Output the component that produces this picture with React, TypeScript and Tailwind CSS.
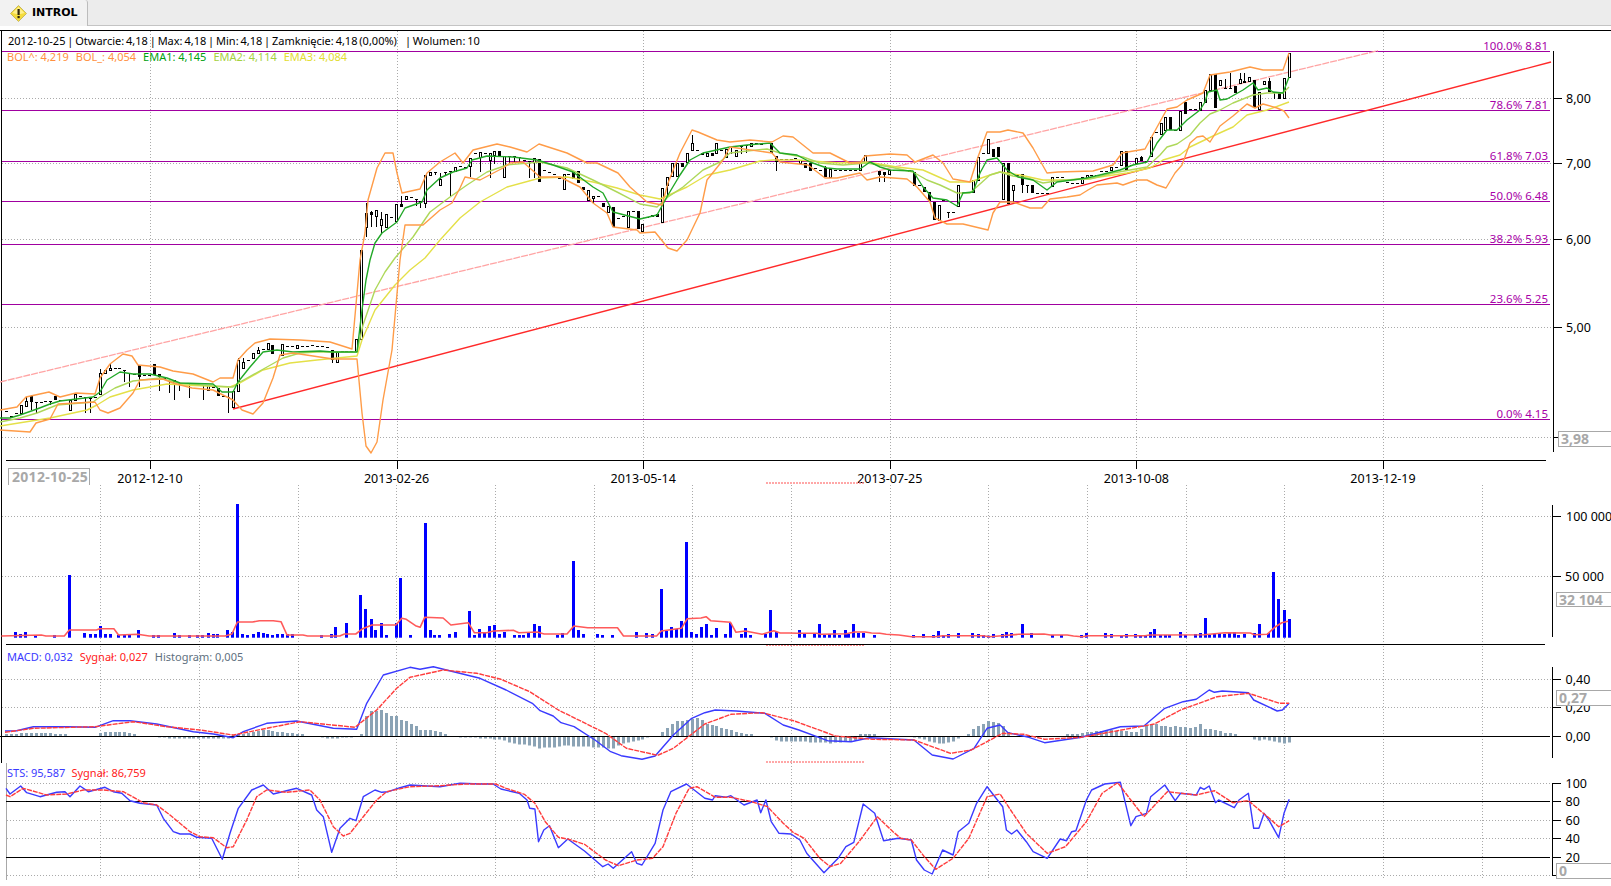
import type { ReactNode } from "react";

type Pt = [number, number];

const W = 1611;
const step = 4.934;
const cx = (i: number) => 6 + step * i;

// crop coordinates -> page coordinates
const conv = (flat: number[], ox: number, oy: number, sx: number, sy = 3): Pt[] => {
  const out: Pt[] = [];
  for (let i = 0; i < flat.length; i += 2) out.push([ox + flat[i] / sx, oy + flat[i + 1] / sy]);
  return out;
};
const pair = (flat: number[]) => conv(flat, 0, 0, 1, 1);
const toPoints = (p: Pt[]) =>
  [...p]
    .sort((a, b) => a[0] - b[0])
    .map(([x, y]) => `${x.toFixed(1)},${y.toFixed(1)}`)
    .join(" ");

const bolUp = pair([
  0,410,17,407,26,397,49,392,60,397,76,393,95,394,100,378,110,364,123,354,132,356,138,365,160,367,173,371,193,374,213,382,220,378,233,378,238,360,247,350,255,343,270,339,300,340,330,342,352,349,
  360,260,365,233,368,200,377,168,385,153,393,153,397,173,402,193,420,189,427,173,440,162,455,153,463,163,473,150,497,144,510,147,527,152,539,144,567,153,587,163,597,163,618,173,630,187,647,202,662,205,668,183,680,153,692,130,698,132,717,140,
  730,142,750,140,772,142,783,136,793,137,813,153,830,153,850,163,860,163,865,156,890,154,907,155,915,162,933,155,943,163,953,179,970,182,978,157,987,132,
  1000,132,1008,130,1023,133,1033,148,1047,173,1058,172,1093,171,1113,165,1122,153,1145,149,1167,109,1177,107,1187,100,1203,93,1210,75,1230,72,1250,67,1263,70,1283,70,1289,53,
]);
const bolLow = pair([
  0,430,30,432,36,423,50,419,58,404,95,402,100,410,108,413,120,408,133,393,140,380,163,379,173,383,192,388,213,390,233,400,242,410,253,414,263,403,273,378,277,365,280,355,293,353,333,359,357,359,362,413,366,446,371,453,377,442,383,400,392,350,
  400,260,405,225,423,225,440,210,452,203,460,188,465,177,480,180,503,168,510,163,523,162,540,177,560,177,580,187,593,203,607,213,613,227,637,230,640,233,655,232,668,248,677,251,687,240,700,213,707,180,723,160,
  730,147,772,153,780,162,808,165,825,178,837,178,860,173,867,180,880,177,907,179,917,187,930,202,935,218,947,224,963,224,988,230,993,213,
  1000,202,1013,202,1030,208,1042,208,1050,199,1067,197,1080,195,1088,190,1097,185,1117,183,1123,185,1137,180,1147,180,1157,185,1166,188,1175,173,1182,165,1190,143,1197,137,1203,136,1210,142,1220,126,1233,116,1247,104,1255,108,1263,104,1277,108,1284,111,1289,118,
]);
const ema1 = pair([
  0,418,10,418,20,415,37,409,50,404,60,401,93,397,100,392,107,380,120,372,133,374,150,374,167,378,180,383,213,384,222,392,233,392,238,382,250,367,263,352,277,350,293,352,320,351,333,352,357,352,362,310,366,280,
  370,260,375,243,382,233,397,222,405,208,422,202,427,190,440,178,453,172,467,168,472,160,487,156,513,157,537,160,553,165,573,172,593,187,603,193,613,212,640,219,657,215,668,195,680,175,690,160,703,153,
  730,147,747,145,770,143,780,153,797,155,810,162,827,168,837,169,860,169,870,162,880,167,890,170,913,171,923,187,933,198,947,200,957,206,963,193,973,192,980,173,987,160,997,158,
  1007,170,1018,177,1033,180,1047,190,1057,182,1087,178,1100,175,1120,170,1133,165,1147,162,1157,143,1167,130,1177,130,1187,120,1200,110,1205,102,1208,92,1217,90,1220,100,1227,99,1243,90,1253,83,1258,90,1267,88,1273,92,1283,93,1289,77,
]);
const ema2 = pair([
  0,422,20,418,37,413,57,405,93,402,100,397,115,388,133,381,160,378,177,383,213,386,233,387,240,382,267,367,283,358,300,353,317,352,357,352,363,325,375,290,385,272,
  395,258,413,237,430,212,450,197,467,185,487,172,507,165,540,162,567,168,593,180,617,192,640,204,657,207,668,197,683,187,703,170,720,162,
  730,153,747,151,767,149,780,153,803,157,820,163,843,165,867,163,890,167,913,172,927,180,940,185,957,193,970,193,990,175,
  1000,172,1013,176,1027,178,1043,183,1063,180,1090,179,1113,173,1147,167,1160,155,1167,147,1177,144,1190,135,1200,123,1210,114,1220,110,1233,103,1253,95,1267,93,1283,93,1289,87,
]);
const ema3 = pair([
  0,426,50,418,87,410,97,405,110,397,133,390,167,384,183,385,230,387,240,383,263,370,290,363,317,360,357,356,362,340,375,310,395,285,410,270,
  425,258,440,240,460,218,480,202,507,187,540,178,567,177,593,182,617,188,640,195,660,199,687,187,707,175,730,170,760,161,773,160,797,160,840,163,867,162,897,167,923,170,950,182,970,182,990,175,
  1000,172,1020,175,1043,180,1067,180,1093,178,1127,173,1150,168,1163,160,1180,155,1190,147,1213,136,1233,127,1247,115,1267,110,1289,102,
]);

// i, bodyTop, bodyBottom, filled, wickTop, wickBottom
const candles: number[][] = [
  [0,411,411,0],[1,416,418,1],[2,413,413,0],[3,405,413,0],[4,401,406,0,397],[5,396,402,1,395,410],[6,402,402,0,0,413],[7,402,402,0],[8,401,401,0],[9,401,401,0,0,405],
  [10,396,400,1],[11,400,400,0],[12,400,400,0],[13,400,410,0],[14,394,400,0],[15,396,396,0],[16,397,397,0,0,413],[17,398,398,0,0,413],[18,397,397,0],[19,373,394,0,369],
  [20,370,373,0],[21,368,370,0,363],[22,368,368,0],[23,368,368,0],[24,370,370,0,0,382],[25,373,373,0,0,387],[26,374,374,0],[27,365,377,1,0,387],[28,375,375,0],[29,375,375,0],
  [30,364,375,1],[31,374,377,1,0,391],[32,378,378,0],[33,381,381,0,0,393],[34,380,383,1,0,400],[35,383,383,0,0,391],[36,383,383,0],[37,383,383,0,0,398],[38,383,386,1],[39,385,385,0],
  [40,385,385,0,0,400],[41,385,390,0],[42,387,387,0],[43,388,396,1],[44,396,396,0],[45,397,397,0,388,413],[46,391,407,0],[47,360,391,0,358],[48,362,368,0,358],[49,360,360,0],
  [50,353,358,0],[51,350,353,0,347],[52,349,349,0],[53,343,349,0],[54,345,354,1],[55,350,350,0],[56,344,355,0],[57,346,346,0],[58,346,346,0],[59,345,348,0],
  [60,346,346,0],[61,346,346,0],[62,345,345,0],[63,346,346,0],[64,346,346,0],[65,347,347,0],[66,350,360,1,0,363],[67,352,362,0],[68,351,351,0],[69,351,351,0],[70,351,351,0],
  [71,339,351,0],[72,250,339,0],[73,213,227,0,203,237],[74,212,215,1,211,227],[75,210,216,0,0,227],[76,219,225,0,212,233],[77,214,227,0],[78,217,217,0],[79,204,221,0],
  [80,204,207,1,196],[81,196,199,0],[82,197,197,0],[83,199,199,0,0,206],[84,201,203,1,0,208],[85,175,203,0,0,208],[86,172,175,0],[87,172,172,0,0,175],[88,179,185,0,173],[89,172,172,0,0,175],
  [90,171,171,0,0,196],[91,167,171,0],[92,166,166,0],[93,167,167,0],[94,158,166,0,0,177],[95,153,154,1],[96,152,157,0,0,172],[97,153,153,0],[98,153,160,0,0,178],[99,151,155,0,0,164],
  [100,151,157,1],[101,156,177,0],[102,156,156,0,0,163],[103,156,156,0,0,163],[104,157,157,0,0,163],[105,160,160,0],[106,161,161,0,0,178],[107,158,162,0,0,178],[108,159,182,1],[109,170,170,0],
  [110,172,172,0],[111,174,174,0],[112,177,179,1],[113,174,189,0],[114,174,174,0],[115,172,179,1],[116,171,183,1],[117,187,190,1],[118,190,200,0],[119,196,198,0,0,204],
  [120,196,196,0],[121,203,207,1],[122,206,212,0],[123,207,227,1],[124,218,218,0],[125,216,216,0],[126,211,227,0],[127,211,211,0],[128,211,229,1],[129,224,231,0],
  [130,217,217,0],[131,215,217,1],[132,214,217,1],[133,188,222,0],[134,177,185,0,0,195],[135,163,176,0],[136,163,176,0],[137,163,167,1],[138,153,162,0],[139,143,150,0,135],
  [140,150,150,0],[141,153,155,1],[142,153,156,0],[143,153,156,1],[144,143,153,0],[145,150,150,0],[146,149,157,0],[147,147,147,0,0,154],[148,150,156,0],[149,145,147,1,0,154],
  [150,145,146,1,0,153],[151,143,146,0],[152,143,143,0],[153,144,144,0],[154,143,143,0],[155,143,153,1],[156,156,162,1,0,171],[157,159,159,0],[158,159,159,0],[159,159,159,0],
  [160,158,159,1],[161,160,163,0],[162,163,168,1],[163,163,171,1],[164,168,168,0],[165,170,170,0],[166,168,177,1,166],[167,169,177,0],[168,170,170,0],[169,170,170,0],
  [170,170,170,0],[171,170,170,0],[172,170,170,0],[173,163,170,0],[174,155,163,0],[175,162,162,0],[176,164,164,0],[177,171,175,1,0,182],[178,172,175,1,0,182],[179,170,174,0],
  [180,170,170,0],[181,170,170,0],[182,170,170,0],[183,170,172,1],[184,172,186,1],[185,185,186,1],[186,187,192,1],[187,192,201,1],[188,202,220,1],[189,205,220,0],
  [190,200,200,0],[191,212,212,0,0,218],[192,212,212,0],[193,185,206,0],[194,192,192,0],[195,192,192,0],[196,180,192,0],[197,157,180,0],[198,153,153,0],[199,139,153,0],
  [200,149,157,1],[201,147,157,1],[202,163,199,0],[203,163,204,1],[204,185,190,0,0,203],[205,175,175,0],[206,174,185,1,0,193],[207,185,185,0,0,193],[208,185,193,1],[209,193,193,0],
  [210,193,193,0],[211,193,193,0],[212,177,186,0],[213,177,177,0],[214,177,177,0],[215,182,182,0],[216,183,183,0],[217,183,183,0],[218,177,183,0],[219,175,178,0],
  [220,175,175,0],[221,175,175,0],[222,171,171,0],[223,171,171,0],[224,167,170,0],[225,167,167,0],[226,151,165,0],[227,151,170,1],[228,165,165,0],[229,158,163,0],
  [230,157,161,1,156],[231,161,161,0],[232,137,156,0],[233,132,132,0],[234,123,134,0],[235,117,130,0],[236,117,130,1],[237,130,130,0],[238,111,130,0],[239,102,114,1],
  [240,109,109,0],[241,109,109,0],[242,102,110,0],[243,90,102,0],[244,74,90,0],[245,74,108,1],[246,80,85,0],[247,88,88,0,79],[248,88,88,0,73],[249,86,93,1],
  [250,79,83,0,73],[251,81,83,1,73],[252,77,81,0],[253,80,108,1],[254,92,109,0],[255,81,84,0],[256,81,92,1,78],[257,92,93,1,0,99],[258,92,99,1],[259,78,98,0],[260,53,77,0],
];

const volLeft = conv([
  33,426,44,432,55,426,77,435,118,435,151,255,184,429,195,432,206,432,217,408,228,432,239,432,258,435,269,435,280,435,301,420,334,435,345,435,378,429,389,435,411,435,430,435,441,435,452,429,463,432,473,432,495,420,506,426,517,42,528,432,539,435,550,432,561,426,572,429,581,432,592,435,603,432,614,432,625,432,635,432,700,435,722,432,730,411,753,399,785,315,796,357,807,387,817,420,829,399,840,435,862,399,872,264,892,435,925,99,936,420,946,435,957,435,979,432,990,426,1022,363,1033,435,1044,417,1054,429,1064,408,1075,405,1086,432,1097,426,1119,435,1130,435,1140,435,1151,429,1162,402,1173,408,1214,435,1225,429,1247,213,1258,420,1269,432,1301,432,1312,435,1334,435,1386,426,1408,429,1419,432,1440,297,1451,423,1462,411,1473,417,1484,393,1495,156,
], 0, 490, 2.178);
const volRight = conv([
  122,426,134,432,146,411,156,402,168,435,180,414,203,432,215,399,239,432,250,414,262,435,298,432,310,360,322,426,378,420,390,432,414,432,426,402,438,435,450,432,462,420,474,435,486,420,495,432,507,402,519,429,531,429,555,435,649,435,672,432,695,435,707,423,719,435,731,432,755,429,790,429,802,432,814,435,826,437,838,432,859,432,870,426,882,429,907,402,930,429,978,435,1001,435,1047,435,1059,429,1106,429,1118,432,1142,435,1154,432,1177,432,1189,435,1199,435,1211,426,1222,417,1235,435,1247,435,1258,435,1282,426,1294,435,1318,432,1330,429,1342,384,1353,435,1365,432,1376,429,1388,432,1400,429,1411,426,1422,435,1434,432,1458,429,1470,402,1493,429,1505,246,1517,327,1529,360,1541,387,
], 640, 490, 2.376);
const volAvg = [
  ...conv([3,438,90,435,100,438,140,438,151,420,210,420,217,416,248,416,258,435,300,433,325,438,490,438,505,432,517,396,550,396,565,392,595,392,612,395,625,435,660,435,670,438,740,438,750,432,775,432,790,416,810,405,862,405,875,385,885,388,905,407,915,412,925,382,965,384,982,405,1020,398,1033,428,1060,428,1075,423,1118,421,1130,428,1170,426,1185,432,1235,432,1250,408,1280,413,1345,413,1358,438,1430,438,1440,423,1484,415,1497,386], 0, 490, 2.178),
  ...conv([145,384,157,380,168,392,215,397,228,427,250,423,290,433,318,422,333,429,355,429,375,430,420,430,430,433,490,431,510,426,535,426,550,429,570,430,585,433,615,435,645,440,700,440,720,437,815,437,830,440,860,437,900,433,960,432,975,435,1015,435,1030,438,1050,440,1065,437,1200,437,1210,435,1340,434,1390,428,1450,429,1460,434,1490,433,1510,410,1525,398,1540,394], 640, 490, 2.376),
];

const macd = [
  ...conv([15,333,50,332,100,320,200,320,285,322,340,302,390,302,470,312,580,335,640,342,700,353,730,335,800,310,890,303,1000,325,1070,328,1100,250,1150,165,1230,142,1260,148,1300,140,1400,165], 0, 620, 3),
  ...conv([0,85,50,120,100,160,115,182,140,198,155,218,180,230,220,270,250,305,270,317,310,328,335,318,370,255,405,205,430,188,450,180,490,183,545,190,580,225,610,240,665,272,710,275,745,263,830,270,865,315,905,327,945,295,970,235,995,225,1010,248,1050,262,1080,278,1150,262,1225,230,1270,228,1310,175,1345,155,1370,148,1395,120,1405,127,1420,123,1470,128,1480,150,1525,183,1535,180,1548,160], 480, 650, 1.913),
];
const macdSig = [
  ...conv([15,337,100,325,285,320,400,305,500,320,600,330,700,345,800,325,900,305,1065,322,1130,270,1190,205,1230,172,1330,150,1430,160], 0, 620, 3),
  ...conv([0,72,40,88,95,125,150,180,240,250,280,295,340,316,370,295,430,222,480,193,540,188,600,212,680,258,750,268,830,270,900,310,940,300,1000,250,1040,253,1080,268,1150,262,1220,242,1290,222,1340,180,1410,140,1470,130,1500,145,1530,160,1548,160], 480, 650, 1.913),
];
const stsK = [
  ...conv([18,505,30,522,62,498,80,518,120,530,170,517,195,515,210,530,240,498,265,515,315,502,340,515,365,520,390,542,420,550,470,555,490,595,520,635,540,642,570,642,590,652,635,655,667,718,690,640,715,565,755,510,790,495,820,522,890,505,935,525,950,570,970,590,995,697,1020,625,1050,595,1068,602,1090,530,1125,510,1145,517,1165,515,1200,503,1230,495,1320,500,1380,490], 0, 620, 3),
  ...conv([0,402,25,402,40,417,75,430,90,450,95,475,105,477,112,575,122,540,133,527,150,593,168,567,200,603,235,650,245,642,255,655,290,605,300,640,310,645,335,580,350,480,365,425,395,402,430,445,445,450,450,437,470,442,480,437,505,465,530,450,537,488,547,450,557,515,572,550,595,552,612,570,625,610,658,668,685,625,700,590,715,577,733,462,755,490,772,572,800,565,825,570,835,630,850,660,865,672,885,600,905,615,915,545,935,520,950,460,970,410,1000,470,1007,540,1017,552,1027,540,1045,575,1058,605,1085,625,1110,567,1122,572,1132,545,1140,542,1160,450,1170,420,1195,402,1225,397,1245,527,1255,500,1275,490,1283,440,1310,405,1330,452,1340,430,1370,435,1378,412,1385,418,1395,408,1407,458,1413,450,1443,473,1452,450,1470,430,1480,535,1490,535,1500,490,1510,512,1528,563,1538,490,1548,448], 480, 650, 1.913),
];
const stsD = [
  ...conv([18,525,30,530,70,505,140,525,200,522,250,510,310,510,370,515,430,548,470,555,510,585,570,635,600,650,640,653,680,683,700,680,740,600,770,530,800,510,860,517,930,510,960,540,1000,620,1030,648,1050,640,1090,590,1130,540,1160,515,1230,500,1320,497,1400,492], 0, 620, 3),
  ...conv([0,402,30,402,50,415,85,433,105,460,125,515,150,562,170,568,200,583,240,630,265,647,300,630,330,625,350,590,375,490,400,415,415,410,450,442,480,442,520,455,550,470,580,520,600,548,620,565,650,625,670,650,690,640,725,575,760,500,790,545,805,565,825,570,850,620,872,658,905,625,935,565,970,440,995,432,1015,480,1045,550,1085,610,1120,590,1160,515,1190,430,1220,398,1245,450,1270,500,1300,450,1315,425,1370,435,1405,422,1440,458,1470,452,1510,505,1528,530,1548,512], 480, 650, 1.913),
];

// histogram runs: first candle index, then heights above the zero line
const histRuns: number[][] = [
  [0,2,2,2,3,3,3,3,3,3,3,2,2,2],
  [19,3,4,4,4,4,4,3,2],
  [31,-1,-1,-2,-2,-2,-2,-2,-2,-2,-2,-2,-2,-2,-2,-2],
  [46,1,2,2,3,4,5,6,6,5,4,4,3,3,2,2],
  [64,-1,-2,-2,-2,-1,-1,-1],
  [72,2,20,25,25,26,23,20,20,16,15,12,10,6,6,6,5,4,2],
  [92,-1,-1,-1,-1,-2,-2,-2,-3,-3,-4,-6,-7,-8,-8,-9,-10,-12,-11,-11,-11,-10,-9,-9,-10,-10,-10,-10,-11,-11,-11,-12,-12,-9,-7,-6,-5,-4,-3,-1],
  [133,4,8,12,15,15,16,17,18,16,12,11,10,8,7,6,4,3,2,2],
  [155,-1,-4,-5,-5,-5,-5,-5,-5,-6,-6,-6,-6,-7,-6,-6,-5,-5,-4],
  [173,2,2,2,2],
  [184,-1,-2,-3,-5,-6,-7,-7,-6,-5,-2],
  [195,2,7,10,12,15,14,13,10,4],
  [215,2,2,2,3,4,4,5,5,5,6,5,5,5,4,4,7,10,11,12,10,10,9,10,9,9,8,9,12,7,7,6,5,3,3,2],
  [253,-3,-4,-3,-4,-5,-6,-7,-6],
];

const mainGridX = [150, 396.6, 643.2, 889.8, 1136.4, 1383];
const lowerGridX = Array.from({ length: 15 }, (_, n) => 100.4 + 98.66 * n);

const fibs: [string, number, number][] = [
  ["100.0% 8.81", 51.5, 46],
  ["78.6% 7.81", 110.5, 105],
  ["61.8% 7.03", 161.5, 156],
  ["50.0% 6.48", 201.5, 196],
  ["38.2% 5.93", 244.5, 239],
  ["23.6% 5.25", 304.5, 299],
  ["0.0% 4.15", 419.5, 414],
];

const dotted = "#aaaaaa";

function HDots({ y, x1 = 2, x2 = 1552 }: { y: number; x1?: number; x2?: number }) {
  return <line x1={x1} x2={x2} y1={y} y2={y} stroke={dotted} strokeDasharray="1 2" />;
}
function VDots({ x, y1, y2 }: { x: number; y1: number; y2: number }) {
  const px = Math.round(x) + 0.5;
  return <line x1={px} x2={px} y1={y1} y2={y2} stroke={dotted} strokeDasharray="1 2" />;
}
function Solid({ x1, x2, y1, y2 = y1 }: { x1: number; x2: number; y1: number; y2?: number }) {
  return <line x1={x1} x2={x2} y1={y1} y2={y2} stroke="#000" />;
}
function Trace({ p, color, width = 1.4, dash }: { p: Pt[]; color: string; width?: number; dash?: string }) {
  return (
    <polyline
      points={toPoints(p)}
      fill="none"
      stroke={color}
      strokeWidth={width}
      strokeDasharray={dash}
      strokeLinejoin="round"
    />
  );
}
function AxisLabel({ x, y, children }: { x: number; y: number; children: ReactNode }) {
  return (
    <text x={x} y={y + 4.5} fill="#000" fontSize={12.5}>
      {children}
    </text>
  );
}
function Tick({ x, y, len = 9 }: { x: number; y: number; len?: number }) {
  return <Solid x1={x} x2={x + len} y1={y} />;
}
function PinkDash({ y }: { y: number }) {
  return <line x1={766} x2={864} y1={y} y2={y} stroke="#ff8a8a" strokeWidth={1.5} strokeDasharray="2 1" />;
}

function Pane({ top, height, children, overlay }: { top: number; height: number; children: ReactNode; overlay?: ReactNode }) {
  return (
    <div className="relative shrink-0 overflow-hidden" style={{ height }}>
      <svg width={W} height={height} viewBox={`0 ${top} ${W} ${height}`} className="block">
        {children}
      </svg>
      {overlay}
    </div>
  );
}

function ValueBox({ className, children }: { className: string; children: ReactNode }) {
  return (
    <div
      className={`absolute right-[-2px] flex items-center border border-[#a8a8a8] bg-white pl-[2px] text-[14px] leading-none font-bold text-[#a8a8a8] ${className}`}
    >
      {children}
    </div>
  );
}

function Candle({ c }: { c: number[] }) {
  const [i, t, b, filled, wt, wb] = c;
  const x = Math.round(cx(i));
  const mid = x + 0.5;
  const top = wt || t;
  const bottom = wb || b;
  return (
    <g>
      {(top < t || bottom > b) && <line x1={mid} x2={mid} y1={top} y2={bottom} stroke="#000" />}
      {t === b ? (
        <line x1={x - 1} x2={x + 2} y1={Math.round(t) + 0.5} y2={Math.round(t) + 0.5} stroke="#000" />
      ) : filled ? (
        <rect x={x - 1} y={t} width={3} height={b - t} fill="#000" />
      ) : (
        <rect x={x - 0.5} y={t + 0.5} width={2} height={b - t} fill="#fff" stroke="#000" />
      )}
    </g>
  );
}

function MainChart() {
  return (
    <Pane
      top={30}
      height={455}
      overlay={
        <>
          <div className="absolute left-[8px] top-[4px] flex whitespace-pre text-[11px] leading-[14px] text-black [word-spacing:-1px]">
            <span>2012-10-25 | Otwarcie: 4,18 | Max: 4,18 | Min: 4,18 | Zamknięcie: 4,18 (0,00%)</span>
            <span className="ml-[8px]">| Wolumen: 10</span>
          </div>
          <div className="absolute left-[7px] top-[20px] flex gap-[7px] whitespace-pre text-[11px] leading-[14px]">
            <span className="text-[#ff9040]">BOL^: 4,219</span>
            <span className="text-[#ff9040]">BOL_: 4,054</span>
            <span className="text-[#00a010]">EMA1: 4,145</span>
            <span className="text-[#a4d040]">EMA2: 4,114</span>
            <span className="text-[#e2dc30]">EMA3: 4,084</span>
          </div>
          <div className="absolute left-[8px] top-[438px] h-[20px] w-[82px] border border-[#a8a8a8] pl-[3px] text-[14px] leading-[16px] font-bold tracking-[0.3px] text-[#a8a8a8]">
            2012-10-25
          </div>
          <ValueBox className="left-[1558px] top-[401px] h-[16px]">3,98</ValueBox>
        </>
      }
    >
      <Solid x1={0} x2={W} y1={30.5} />
      <Solid x1={1.5} x2={1.5} y1={30} y2={485} />
      {mainGridX.map((x) => (
        <VDots key={x} x={x} y1={31} y2={460} />
      ))}
      {[98.5, 163.5, 239.5, 327.5, 437.5].map((y) => (
        <HDots key={y} y={y} />
      ))}
      {fibs.map(([label, y, ty]) => (
        <g key={label}>
          <line x1={2} x2={1550} y1={y} y2={y} stroke="#a000a0" />
          <text x={1548} y={ty + 4} textAnchor="end" fontSize={11.5} fill="#a800a8">
            {label}
          </text>
        </g>
      ))}
      <line x1={0} x2={1378} y1={382} y2={50.7} stroke="#ffa4a4" strokeWidth={1.3} strokeDasharray="7 1" />
      <line x1={233} x2={1551} y1={409} y2={62} stroke="#ff2a2a" strokeWidth={1.4} />
      {candles.map((c) => (
        <Candle key={c[0]} c={c} />
      ))}
      <Trace p={ema3} color="#e4e048" />
      <Trace p={ema2} color="#aed85a" />
      <Trace p={ema1} color="#22a828" />
      <Trace p={bolUp} color="#ff9c48" />
      <Trace p={bolLow} color="#ff9c48" />
      <Solid x1={1553.5} x2={1553.5} y1={51} y2={452} />
      <Tick x={1553} y={98.5} />
      <Tick x={1553} y={163.5} />
      <Tick x={1553} y={239.5} />
      <Tick x={1553} y={327.5} />
      <Tick x={1553} y={437.5} len={5} />
      <AxisLabel x={1566} y={98}>8,00</AxisLabel>
      <AxisLabel x={1566} y={163}>7,00</AxisLabel>
      <AxisLabel x={1566} y={239}>6,00</AxisLabel>
      <AxisLabel x={1566} y={327}>5,00</AxisLabel>
      <Solid x1={6} x2={1546} y1={460.5} />
      {mainGridX.map((x, n) => (
        <g key={x}>
          <Solid x1={Math.round(x) + 0.5} x2={Math.round(x) + 0.5} y1={460} y2={469} />
          <text x={x} y={482.5} textAnchor="middle" fontSize={12.5} fill="#000">
            {["2012-12-10", "2013-02-26", "2013-05-14", "2013-07-25", "2013-10-08", "2013-12-19"][n]}
          </text>
        </g>
      ))}
      <PinkDash y={483} />
    </Pane>
  );
}

function VolumeChart() {
  const bars = [...volLeft, ...volRight];
  return (
    <Pane
      top={485}
      height={161}
      overlay={<ValueBox className="left-[1556px] top-[107px] h-[15px]">32 104</ValueBox>}
    >
      <Solid x1={1.5} x2={1.5} y1={485} y2={646} />
      {lowerGridX.map((x) => (
        <VDots key={x} x={x} y1={485} y2={646} />
      ))}
      <HDots y={516.5} />
      <HDots y={576.5} />
      {bars.map(([x, y]) => (
        <rect key={x} x={Math.round(x) - 1} y={y} width={3} height={637.7 - y} fill="#0000ff" />
      ))}
      <Trace p={volAvg} color="#ff5a5a" width={1.6} />
      <Solid x1={6} x2={1545} y1={644.5} />
      <PinkDash y={645.7} />
      <Solid x1={1552.5} x2={1552.5} y1={505} y2={637} />
      <Tick x={1552} y={516.5} />
      <Tick x={1552} y={576.5} />
      <AxisLabel x={1566} y={516}>100 000</AxisLabel>
      <AxisLabel x={1565} y={576}>50 000</AxisLabel>
    </Pane>
  );
}

function MacdChart() {
  return (
    <Pane
      top={646}
      height={117}
      overlay={
        <>
          <div className="absolute left-[7px] top-[4px] flex gap-[7px] whitespace-pre text-[11px] leading-[14px]">
            <span className="text-[#3a3aff]">MACD: 0,032</span>
            <span className="text-[#ff2020]">Sygnał: 0,027</span>
            <span className="text-[#607080]">Histogram: 0,005</span>
          </div>
          <ValueBox className="left-[1556px] top-[44px] h-[16px]">0,27</ValueBox>
        </>
      }
    >
      <Solid x1={1.5} x2={1.5} y1={646} y2={763} />
      {lowerGridX.map((x) => (
        <VDots key={x} x={x} y1={646} y2={763} />
      ))}
      <HDots y={679.5} />
      <HDots y={707.5} />
      {histRuns.map((run) =>
        run.slice(1).map((h, n) => {
          const x = Math.round(cx(run[0] + n));
          return (
            <rect
              key={run[0] + n}
              x={x - 1}
              y={h > 0 ? 736 - h : 736.5}
              width={3}
              height={Math.abs(h)}
              fill="#8ba3b5"
            />
          );
        }),
      )}
      <Solid x1={0} x2={1550} y1={736.5} />
      <Trace p={macd} color="#3a3aff" />
      <Trace p={macdSig} color="#ff3c3c" dash="5 1" />
      <PinkDash y={762} />
      <Solid x1={1552.5} x2={1552.5} y1={667} y2={758} />
      <Tick x={1552} y={679.5} />
      <Tick x={1552} y={707.5} />
      <Tick x={1552} y={736.5} />
      <AxisLabel x={1565.5} y={679}>0,40</AxisLabel>
      <AxisLabel x={1565.5} y={707}>0,20</AxisLabel>
      <AxisLabel x={1565.5} y={736}>0,00</AxisLabel>
    </Pane>
  );
}

function StsChart() {
  return (
    <Pane
      top={763}
      height={123}
      overlay={
        <>
          <div className="absolute left-[7px] top-[3px] flex gap-[6px] whitespace-pre text-[11px] leading-[14px]">
            <span className="text-[#3a3aff]">STS: 95,587</span>
            <span className="text-[#ff2020]">Sygnał: 86,759</span>
          </div>
          <ValueBox className="left-[1556px] top-[100px] h-[16px]">0</ValueBox>
        </>
      }
    >
      <line x1={6.5} x2={6.5} y1={763} y2={880} stroke="#a8a8a8" />
      {lowerGridX.map((x) => (
        <VDots key={x} x={x} y1={763} y2={878} />
      ))}
      <HDots y={783.5} x1={7} />
      <HDots y={820.5} x1={7} />
      <HDots y={838.5} x1={7} />
      <HDots y={875.5} x1={7} />
      <Solid x1={6} x2={1550} y1={801.5} />
      <Solid x1={6} x2={1550} y1={857.5} />
      <Trace p={stsK} color="#3a3aff" />
      <Trace p={stsD} color="#ff3c3c" dash="5 1" />
      <Solid x1={1552.5} x2={1552.5} y1={783} y2={876} />
      {[783.5, 801.5, 820.5, 838.5, 857.5, 875.5].map((y) => (
        <Tick key={y} x={1552} y={y} />
      ))}
      <AxisLabel x={1565.5} y={783}>100</AxisLabel>
      <AxisLabel x={1565.5} y={801}>80</AxisLabel>
      <AxisLabel x={1565.5} y={820}>60</AxisLabel>
      <AxisLabel x={1565.5} y={838}>40</AxisLabel>
      <AxisLabel x={1565.5} y={857}>20</AxisLabel>
    </Pane>
  );
}

function WarningIcon() {
  return (
    <svg width="17" height="17" viewBox="0 0 17 17" className="shrink-0">
      <polygon points="8.5,0.5 16.5,8.5 8.5,16.5 0.5,8.5" fill="#f4dc3c" stroke="#c8b860" />
      <polygon points="8.5,2 14.5,8 8.5,9.5 2.5,8" fill="#fff08c" />
      <rect x="7.5" y="4" width="2.2" height="6" fill="#30280a" />
      <rect x="7.5" y="11" width="2.2" height="2.2" fill="#30280a" />
    </svg>
  );
}

export default function App() {
  return (
    <div className="flex h-[886px] w-[1611px] flex-col overflow-hidden bg-white [font-family:'Noto_Sans',sans-serif]">
      <div className="flex h-[26px] shrink-0 items-stretch border-b border-[#c4c4c4] bg-[#ececec]">
        <div className="mb-[-1px] flex w-[88px] items-center gap-[5px] rounded-tr-[3px] border-r border-[#bcbcbc] bg-[#f2f2f2] pl-[10px]">
          <WarningIcon />
          <span className="text-[11px] font-bold text-black [font-family:'DejaVu_Sans',sans-serif]">INTROL</span>
        </div>
      </div>
      <div className="h-[4px] shrink-0" />
      <MainChart />
      <VolumeChart />
      <MacdChart />
      <StsChart />
    </div>
  );
}
